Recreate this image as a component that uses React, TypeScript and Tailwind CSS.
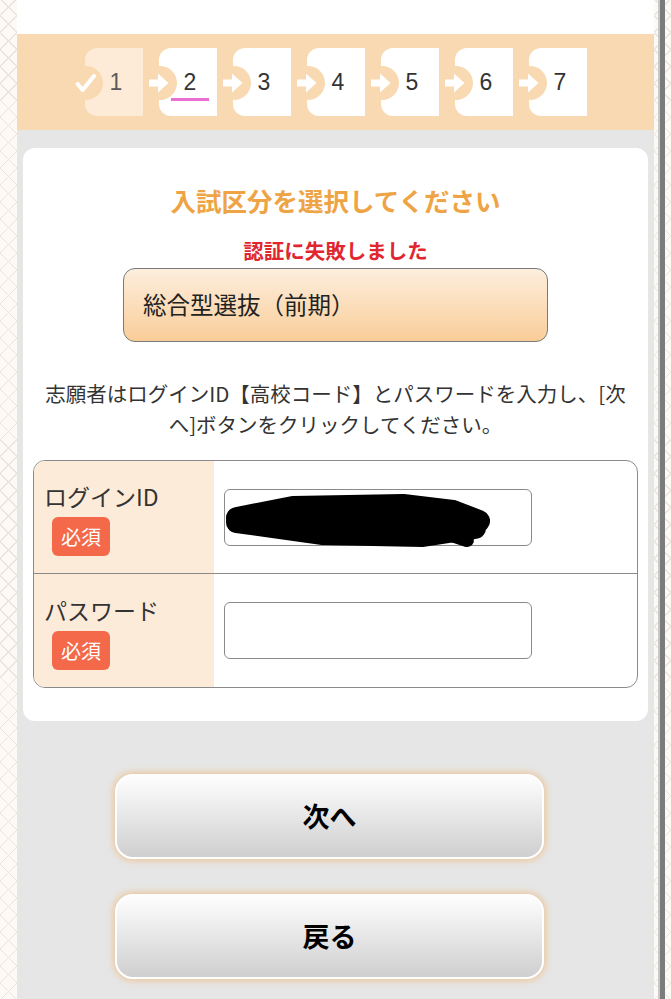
import React from 'react';

const steps = [1, 2, 3, 4, 5, 6, 7];

const pattern =
  'bg-[#fdfaf5] bg-[image:repeating-linear-gradient(45deg,transparent_0,transparent_11px,#ebe4dc_11px,#ebe4dc_12px),repeating-linear-gradient(-45deg,transparent_0,transparent_11px,#ebe4dc_11px,#ebe4dc_12px)]';

function Step({ n }: { n: number }) {
  const done = n === 1;
  const current = n === 2;
  return (
    <div
      className={`relative w-[58px] h-[68px] rounded-l-[12px] flex items-center justify-center pl-[4px] ${
        done ? 'bg-[#fdebd8]' : 'bg-white'
      }`}
    >
      {/* notch */}
      <div className="absolute left-[-16px] top-[18px] w-[34px] h-[34px] rounded-full bg-[#f9d9b1]" />
      {done ? (
        <svg className="absolute left-[-10px] top-[26px] w-[22px] h-[20px]" viewBox="0 0 22 20">
          <polyline
            points="2.7,10 7.7,16 19,2"
            fill="none"
            stroke="#fff"
            strokeWidth="4"
            strokeLinecap="round"
            strokeLinejoin="round"
          />
        </svg>
      ) : (
        <svg className="absolute left-[-10px] top-[25px] w-[20px] h-[20px]" viewBox="0 0 20 20">
          <polygon points="0,6.5 9,6.5 9,0.5 19.5,10 9,19.5 9,13.5 0,13.5" fill="#fff" strokeLinejoin="round" />
        </svg>
      )}
      <span
        className={`relative text-[23px] leading-none font-['Liberation_Sans',Arial,sans-serif] ${
          done ? 'text-[#5a5a5a]' : 'text-[#333]'
        }`}
      >
        {n}
      </span>
      {current && <div className="absolute left-[12px] top-[50px] w-[38px] h-[3px] bg-[#ea6fcf]" />}
    </div>
  );
}

function Badge() {
  return (
    <span className="mt-[6px] ml-[8px] w-[58px] h-[39px] rounded-[6px] bg-[#f4694a] text-white text-[20px] leading-none flex items-center justify-center">
      必須
    </span>
  );
}

export default function App() {
  return (
    <div className="w-full h-screen overflow-hidden flex font-['Noto_Sans_CJK_JP','Noto_Sans',sans-serif] text-[#333]">
      <div className={`w-[17px] shrink-0 ${pattern}`} />

      <main className="flex-1 min-w-0 bg-[#e6e6e6]">
        <div className="h-[34px] bg-white" />

        <div className="h-[96px] bg-[#f9d9b1] flex items-center justify-center gap-[16px] pl-[1px]">
          {steps.map((n) => (
            <Step key={n} n={n} />
          ))}
        </div>

        <section className="mt-[18px] mx-[6px] bg-white rounded-[12px] px-[10px] pt-[35px] pb-[33px]">
          <h1 className="text-center text-[25.5px] leading-[34px] font-bold text-[#eea444]">
            入試区分を選択してください
          </h1>
          <p className="mt-[19px] text-center text-[20.5px] leading-[28px] font-bold text-[#e0262e]">
            認証に失敗しました
          </p>

          <div className="mt-[4px] mx-auto w-[425px] h-[74px] rounded-[12px] border border-[#7a7a7a] bg-linear-to-b from-[#fdeedd] to-[#f9cd98] flex items-center pl-[19px]">
            <span className="text-[23.5px] text-[#222]">総合型選抜（前期）</span>
          </div>

          <p className="mt-[36px] text-center text-[20.5px] leading-[31px] text-[#333]">
            志願者はログインID【高校コード】とパスワードを入力し、[次へ]ボタンをクリックしてください。
          </p>

          <div className="mt-[20px] border-[1.5px] border-[#8a8a8a] rounded-[12px] overflow-hidden">
            <div className="flex h-[113px] border-b-[1.5px] border-[#8a8a8a]">
              <div className="w-[180px] bg-[#fdebd9] pl-[10px] pt-[21px] flex flex-col items-start">
                <span className="text-[23px] leading-[29px]">ログインID</span>
                <Badge />
              </div>
              <div className="flex-1 flex items-center pl-[10px]">
                <div className="relative w-[308px] h-[57px] rounded-[6px] border-[1.5px] border-[#8a8a8a] bg-white">
                  <svg className="absolute left-[-2px] top-[4px] w-[272px] h-[56px]" viewBox="0 0 272 56">
                    <g fill="none" stroke="#000" strokeLinecap="round" strokeLinejoin="round">
                      <polyline points="14,24 70,13 180,11 230,17 256,27" strokeWidth="22" />
                      <polyline points="14,28 100,40 200,42 252,34" strokeWidth="22" />
                      <polyline points="20,27 120,26 240,28" strokeWidth="24" />
                      <polyline points="226,40 244,46" strokeWidth="14" />
                    </g>
                  </svg>
                </div>
              </div>
            </div>
            <div className="flex h-[113px]">
              <div className="w-[180px] bg-[#fdebd9] pl-[10px] pt-[22px] flex flex-col items-start">
                <span className="text-[23px] leading-[29px]">パスワード</span>
                <Badge />
              </div>
              <div className="flex-1 flex items-center pl-[10px]">
                <div className="w-[308px] h-[57px] rounded-[6px] border-[1.5px] border-[#8a8a8a] bg-white" />
              </div>
            </div>
          </div>
        </section>

        <div className="mt-[53px] ml-[98px] w-[429px] flex flex-col gap-[35px]">
          <button className="h-[85px] rounded-[18px] border-2 border-white bg-linear-to-b from-[#fefefe] to-[#cfcfcf] shadow-[0_0_6px_2px_rgba(240,180,110,0.6)] text-[27px] font-bold text-black">
            次へ
          </button>
          <button className="h-[85px] rounded-[18px] border-2 border-white bg-linear-to-b from-[#fefefe] to-[#cfcfcf] shadow-[0_0_6px_2px_rgba(240,180,110,0.6)] text-[27px] font-bold text-black">
            戻る
          </button>
        </div>
      </main>

      <div className={`w-[17px] shrink-0 pl-[4px] ${pattern}`}>
        <div className="w-[7px] h-full bg-[#7b7b7b] border-l-[2px] border-l-[#c9c9c9]" />
      </div>
    </div>
  );
}
